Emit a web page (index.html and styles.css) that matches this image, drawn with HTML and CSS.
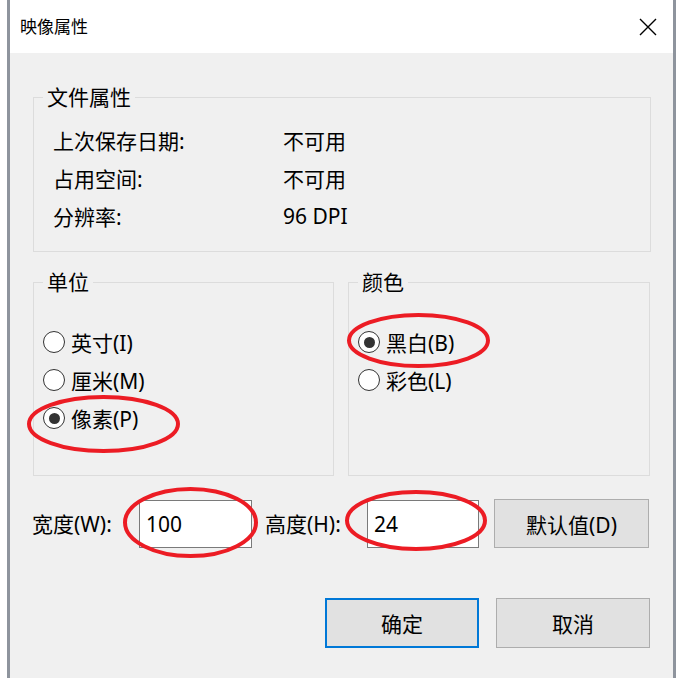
FILE: index.html
```html
<!DOCTYPE html>
<html lang="zh-CN">
<head>
<meta charset="utf-8">
<title>映像属性</title>
<link rel="stylesheet" href="styles.css">
</head>
<body>
<div class="screen">
  <div class="dialog">
    <div class="titlebar">
      <span class="title">映像属性</span>
      <svg class="close" width="18" height="18" viewBox="0 0 18 18"><path d="M1 1L17 17M17 1L1 17"/></svg>
    </div>
    <div class="content">
      <fieldset class="group file">
        <legend>文件属性</legend>
        <div class="info-row"><span class="info-label">上次保存日期:</span><span>不可用</span></div>
        <div class="info-row"><span class="info-label">占用空间:</span><span>不可用</span></div>
        <div class="info-row"><span class="info-label">分辨率:</span><span>96 DPI</span></div>
      </fieldset>
      <div class="groups">
        <fieldset class="group radios units">
          <legend>单位</legend>
          <div class="radio"><span class="dot"></span>英寸(I)</div>
          <div class="radio"><span class="dot"></span>厘米(M)</div>
          <div class="radio"><span class="dot checked"></span>像素(P)</div>
        </fieldset>
        <fieldset class="group radios colors">
          <legend>颜色</legend>
          <div class="radio"><span class="dot checked"></span>黑白(B)</div>
          <div class="radio"><span class="dot"></span>彩色(L)</div>
        </fieldset>
      </div>
      <div class="size-row">
        <span class="size-label width-label">宽度(W):</span>
        <div class="input width-input">100</div>
        <span class="size-label height-label">高度(H):</span>
        <div class="input height-input">24</div>
        <div class="btn default-btn">默认值(D)</div>
      </div>
      <div class="actions">
        <div class="btn ok">确定</div>
        <div class="btn">取消</div>
      </div>
    </div>
  </div>
  <svg class="marks" width="684" height="685" viewBox="0 0 684 685">
    <ellipse cx="103.5" cy="424" rx="74.5" ry="27"/>
    <ellipse cx="418.5" cy="340.5" rx="69.5" ry="25.5"/>
    <ellipse cx="190.5" cy="522.5" rx="65.5" ry="33.5"/>
    <ellipse cx="416" cy="520.5" rx="69" ry="28.5"/>
  </svg>
</div>
</body>
</html>
```
FILE: styles.css
```css
* { box-sizing: border-box; }
html, body {
  margin: 0;
  background: #ffffff;
}
body {
  font-family: "Noto Sans", "Noto Sans CJK SC", sans-serif;
  font-size: 21px;
  color: #000;
}
.screen {
  position: relative;
  width: 684px;
  height: 685px;
}
.dialog {
  margin-left: 7px;
  width: 669px;
  height: 678px;
  border-left: 3px solid #8e949d;
  border-right: 3px solid #8e949d;
  display: flex;
  flex-direction: column;
}
.titlebar {
  height: 53px;
  background: #fff;
  display: flex;
  align-items: center;
  justify-content: space-between;
  padding: 0 16px 0 10px;
}
.title {
  font-size: 17px;
  line-height: 24px;
}
.close {
  fill: none;
  stroke: #000;
  stroke-width: 1.4;
}
.content {
  flex: 1;
  background: #f0f0f0;
  padding: 30px 22px 0 23px;
}
.group {
  margin: 0;
  min-width: 0;
  border: 1px solid #dcdcdc;
  padding: 0 0 16px 9px;
}
.group legend {
  padding: 0 4px;
  line-height: 28px;
}
.file .info-row:first-of-type { margin-top: 10px; }
.info-row {
  height: 38px;
  display: flex;
  align-items: center;
  padding-left: 10px;
}
.info-label {
  width: 230px;
}
.groups {
  display: grid;
  grid-template-columns: 301px 302px;
  column-gap: 14px;
  margin-top: 16px;
}
.radios {
  padding-top: 27px;
  padding-bottom: 38px;
}
.radio {
  height: 38px;
  display: flex;
  align-items: center;
}
.dot {
  width: 22px;
  height: 22px;
  border-radius: 50%;
  border: 1px solid #333;
  background: #fff;
  margin-right: 6px;
  display: flex;
  align-items: center;
  justify-content: center;
}
.dot.checked::after {
  content: "";
  width: 11px;
  height: 11px;
  border-radius: 50%;
  background: #333;
}
.size-row {
  margin-top: 23px;
  display: flex;
  align-items: center;
}
.size-label {
  line-height: 28px;
}
.width-label { width: 107px; margin-left: -1px; }
.height-label { width: 102px; margin-left: 13px; }
.input {
  height: 48px;
  background: #fff;
  border: 1px solid #7a7a7a;
  padding-left: 6px;
  display: flex;
  align-items: center;
}
.width-input { width: 113px; }
.height-input { width: 112px; }
.btn {
  width: 154px;
  height: 50px;
  background: #e1e1e1;
  border: 1px solid #adadad;
  display: flex;
  align-items: center;
  justify-content: center;
}
.default-btn {
  margin-left: 15px;
  width: 155px;
  height: 49px;
}
.actions {
  margin-top: 50px;
  display: flex;
  justify-content: flex-end;
  gap: 17px;
  padding-right: 1px;
}
.btn.ok {
  border: 2px solid #0078d7;
}
.marks {
  position: absolute;
  left: 0;
  top: 0;
  pointer-events: none;
  fill: none;
  stroke: #ec1c24;
  stroke-width: 4;
}
```
